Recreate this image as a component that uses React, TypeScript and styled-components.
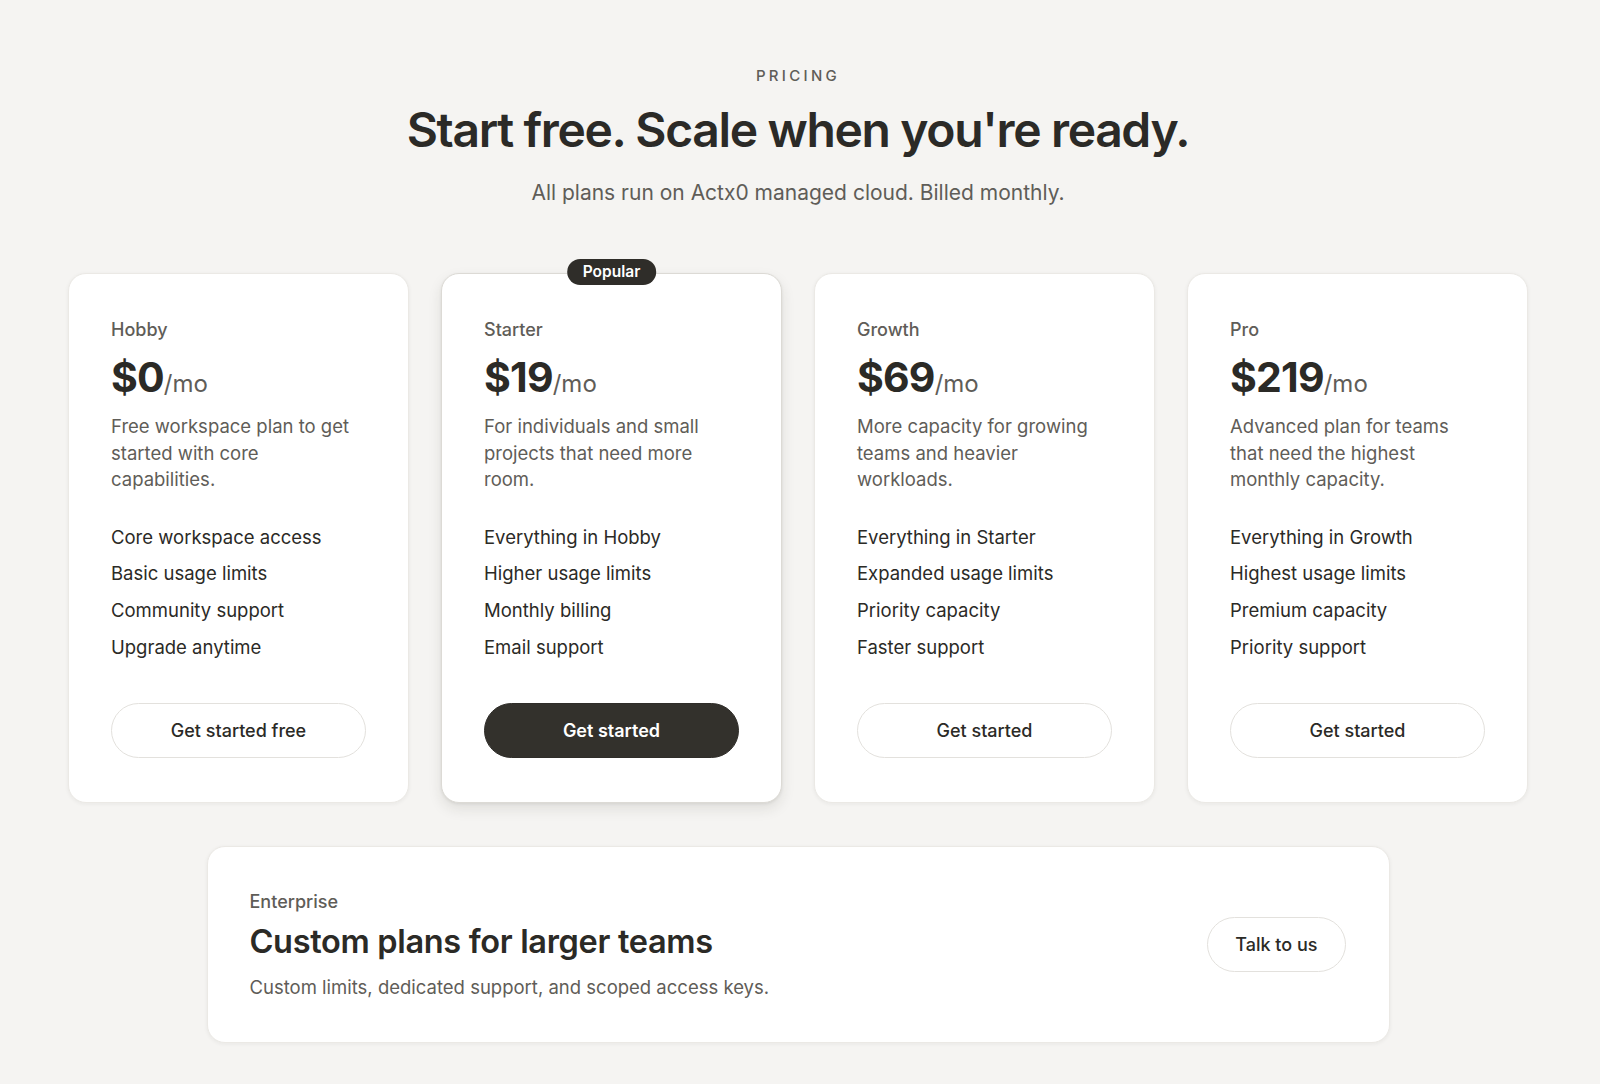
import React from "react";
import styled, { createGlobalStyle } from "styled-components";

const GlobalStyle = createGlobalStyle`
  html, body { margin: 0; padding: 0; }
  body {
    background: #f5f4f2;
    font-family: Inter, "Noto Sans", "Liberation Sans", sans-serif;
    color: #2b2a26;
    -webkit-font-smoothing: antialiased;
  }
  * { box-sizing: border-box; }
`;

const Page = styled.main`
  min-height: 1084px;
  padding: 64px 72px 40px 68px;
  display: flex;
  flex-direction: column;
  align-items: center;
`;

const Header = styled.header`
  display: flex;
  flex-direction: column;
  align-items: center;
  text-align: center;
`;

const Eyebrow = styled.div`
  font-size: 15px;
  line-height: 24px;
  font-weight: 500;
  letter-spacing: 0.22em;
  color: #5f5d58;
  text-transform: uppercase;
`;

const Title = styled.h1`
  margin: 13px 0 0;
  font-size: 48px;
  line-height: 58px;
  font-weight: 600;
  letter-spacing: -0.028em;
  color: #2b2a27;
`;

const Subtitle = styled.p`
  margin: 20px 0 0;
  font-size: 21px;
  line-height: 28px;
  color: #5f5d58;
`;

const Grid = styled.section`
  margin-top: 66px;
  width: 100%;
  display: grid;
  grid-template-columns: repeat(4, 1fr);
  gap: 32px;
`;

const Card = styled.div<{ $featured?: boolean }>`
  position: relative;
  background: #ffffff;
  border: 1px solid ${(p) => (p.$featured ? "#dcdad5" : "#ebe9e5")};
  border-radius: 18px;
  padding: 43px 42px 44px;
  display: flex;
  flex-direction: column;
  box-shadow: ${(p) =>
    p.$featured
      ? "0 6px 14px rgba(40, 36, 30, 0.10), 0 1px 3px rgba(40, 36, 30, 0.08)"
      : "0 1px 4px rgba(40, 36, 30, 0.06)"};
`;

const Badge = styled.span`
  position: absolute;
  top: -15px;
  left: 50%;
  transform: translateX(-50%);
  height: 26px;
  padding: 0 16px;
  border-radius: 13px;
  background: #2f2d29;
  color: #ffffff;
  font-size: 15.5px;
  font-weight: 600;
  line-height: 26px;
  white-space: nowrap;
`;

const PlanName = styled.div`
  font-size: 18px;
  line-height: 26px;
  font-weight: 500;
  color: #5f5d58;
`;

const PriceRow = styled.div`
  margin-top: 10px;
  display: flex;
  align-items: baseline;
  line-height: 48px;
`;

const Amount = styled.span`
  font-size: 41px;
  font-weight: 700;
  letter-spacing: -0.02em;
  color: #2b2a26;
`;

const Per = styled.span`
  font-size: 24px;
  font-weight: 400;
  color: #5f5d58;
`;

const Description = styled.p`
  margin: 5px 0 0;
  max-width: 246px;
  font-size: 18.5px;
  line-height: 26.5px;
  color: #5f5d58;
`;

const Features = styled.ul`
  list-style: none;
  margin: 31px 0 43px;
  padding: 0;
  display: flex;
  flex-direction: column;
  gap: 10.2px;
`;

const Feature = styled.li`
  font-size: 18.5px;
  line-height: 26.5px;
  color: #2b2a26;
`;

const CTA = styled.button<{ $primary?: boolean }>`
  margin-top: auto;
  width: 100%;
  height: 55px;
  border-radius: 28px;
  border: 1px solid ${(p) => (p.$primary ? "#2f2d29" : "#e3e1dd")};
  background: ${(p) => (p.$primary ? "#33312c" : "#ffffff")};
  color: ${(p) => (p.$primary ? "#ffffff" : "#2b2a26")};
  font-family: inherit;
  font-size: 18px;
  font-weight: ${(p) => (p.$primary ? 600 : 500)};
  cursor: pointer;
`;

const Enterprise = styled.section`
  margin-top: 43px;
  width: 1183px;
  background: #ffffff;
  border: 1px solid #ebe9e5;
  border-radius: 18px;
  box-shadow: 0 1px 4px rgba(40, 36, 30, 0.06);
  padding: 42px 43px 42px 42px;
  display: flex;
  align-items: center;
  justify-content: space-between;
`;

const EntText = styled.div`
  display: flex;
  flex-direction: column;
`;

const EntTitle = styled.h2`
  margin: 6px 0 0;
  font-size: 32.5px;
  line-height: 42px;
  font-weight: 600;
  letter-spacing: -0.01em;
  color: #2b2a26;
`;

const EntSub = styled.p`
  margin: 11px 0 0;
  font-size: 18.5px;
  line-height: 26px;
  color: #5f5d58;
`;

const TalkButton = styled.button`
  height: 55px;
  padding: 0 27px;
  border-radius: 28px;
  border: 1px solid #e3e1dd;
  background: #ffffff;
  color: #2b2a26;
  font-family: inherit;
  font-size: 18px;
  font-weight: 500;
  cursor: pointer;
`;

type Plan = {
  name: string;
  price: string;
  desc: string;
  features: string[];
  cta: string;
  featured?: boolean;
};

const plans: Plan[] = [
  {
    name: "Hobby",
    price: "$0",
    desc: "Free workspace plan to get started with core capabilities.",
    features: ["Core workspace access", "Basic usage limits", "Community support", "Upgrade anytime"],
    cta: "Get started free",
  },
  {
    name: "Starter",
    price: "$19",
    desc: "For individuals and small projects that need more room.",
    features: ["Everything in Hobby", "Higher usage limits", "Monthly billing", "Email support"],
    cta: "Get started",
    featured: true,
  },
  {
    name: "Growth",
    price: "$69",
    desc: "More capacity for growing teams and heavier workloads.",
    features: ["Everything in Starter", "Expanded usage limits", "Priority capacity", "Faster support"],
    cta: "Get started",
  },
  {
    name: "Pro",
    price: "$219",
    desc: "Advanced plan for teams that need the highest monthly capacity.",
    features: ["Everything in Growth", "Highest usage limits", "Premium capacity", "Priority support"],
    cta: "Get started",
  },
];

export default function App() {
  return (
    <>
      <GlobalStyle />
      <Page>
        <Header>
          <Eyebrow>Pricing</Eyebrow>
          <Title>Start free. Scale when you're ready.</Title>
          <Subtitle>All plans run on Actx0 managed cloud. Billed monthly.</Subtitle>
        </Header>
        <Grid>
          {plans.map((p) => (
            <Card key={p.name} $featured={p.featured}>
              {p.featured && <Badge>Popular</Badge>}
              <PlanName>{p.name}</PlanName>
              <PriceRow>
                <Amount>{p.price}</Amount>
                <Per>/mo</Per>
              </PriceRow>
              <Description>{p.desc}</Description>
              <Features>
                {p.features.map((f) => (
                  <Feature key={f}>{f}</Feature>
                ))}
              </Features>
              <CTA $primary={p.featured}>{p.cta}</CTA>
            </Card>
          ))}
        </Grid>
        <Enterprise>
          <EntText>
            <PlanName>Enterprise</PlanName>
            <EntTitle>Custom plans for larger teams</EntTitle>
            <EntSub>Custom limits, dedicated support, and scoped access keys.</EntSub>
          </EntText>
          <TalkButton>Talk to us</TalkButton>
        </Enterprise>
      </Page>
    </>
  );
}
